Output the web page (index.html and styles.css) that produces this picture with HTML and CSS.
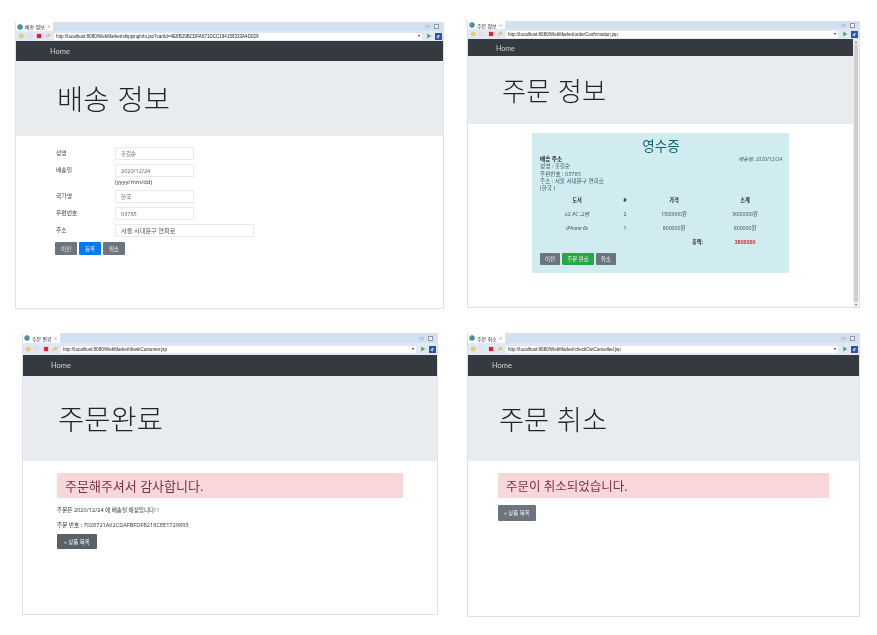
FILE: index.html
```html
<!DOCTYPE html>
<html lang="ko">
<head>
    <meta charset="UTF-8">
    <title>WebMarket</title>
    <link rel="stylesheet" href="styles.css">
</head>
<body>
    <svg class="sprites" width="0" height="0">
        <symbol id="i_globe" viewBox="0 0 10 10"><circle cx="5" cy="5" r="4.5" fill="#3f86c4"/><path d="M2 3l3-2 1 2-2 2 1 3-2-1z" fill="#5fae4c"/></symbol>
        <symbol id="i_back" viewBox="0 0 10 10"><path d="M1 5l4-4v2h4v4H5v2z" fill="#f1cf6a" stroke="#d8ab3c" stroke-width=".5"/></symbol>
        <symbol id="i_fwd" viewBox="0 0 10 10"><path d="M9 5L5 1v2H1v4h4v2z" fill="#e6e6de" stroke="#cfcfc8" stroke-width=".5"/></symbol>
        <symbol id="i_stop" viewBox="0 0 10 10"><rect x="1.5" y="1.5" width="7" height="7" fill="#e5202c"/></symbol>
        <symbol id="i_refresh" viewBox="0 0 10 10"><path d="M1 8c1-4 3-5 5-5V1l3 3-3 3V5C4 5 3 6 1 8z" fill="#eec35a" stroke="#cf9f36" stroke-width=".4"/></symbol>
        <symbol id="i_go" viewBox="0 0 10 10"><path d="M2 1l7 4-7 4z" fill="#4fae5a"/></symbol>
        <symbol id="i_ext" viewBox="0 0 10 10"><rect width="10" height="10" fill="#2a53b0"/><path d="M2 6l3-3 3 1-3 1 1 3z" fill="#d9e2f5"/></symbol>
    </svg>

    <!-- 배송 정보 -->
    <section class="window win_shipping">
        <div class="tabbar">
            <div class="tab"><svg class="ico"><use href="#i_globe"/></svg>배송 정보 <span class="tab_x">✕</span></div>
            <div class="win_btns"><span class="win_min"></span><span class="win_max"></span></div>
        </div>
        <div class="toolbar">
            <svg class="ico"><use href="#i_back"/></svg>
            <svg class="ico"><use href="#i_fwd"/></svg>
            <svg class="ico"><use href="#i_stop"/></svg>
            <svg class="ico"><use href="#i_refresh"/></svg>
            <div class="url"><span>http://localhost:8080/WebMarket/shippingInfo.jsp?cartId=4E8B29BCDFA671DCC194156333A4D029</span><i class="caret"></i></div>
            <svg class="ico"><use href="#i_go"/></svg>
            <svg class="ico"><use href="#i_ext"/></svg>
        </div>
        <div class="page">
            <nav class="navbar"><a>Home</a></nav>
            <div class="jumbotron"><h1>배송 정보</h1></div>
            <form class="ship_form">
                <div class="row"><label>성명</label><div class="field">홍길순</div></div>
                <div class="row row_date"><label>배송일</label><div><div class="field">2020/12/24</div><div class="hint">(yyyy/mm/dd)</div></div></div>
                <div class="row"><label>국가명</label><div class="field">한국</div></div>
                <div class="row"><label>우편번호</label><div class="field">03785</div></div>
                <div class="row"><label>주소</label><div class="field field_wide">서울 서대문구 연희로</div></div>
                <div class="btns">
                    <a class="btn btn_gray">이전</a>
                    <a class="btn btn_blue">등록</a>
                    <a class="btn btn_gray">취소</a>
                </div>
            </form>
        </div>
    </section>

    <!-- 주문 정보 -->
    <section class="window win_confirm">
        <div class="tabbar">
            <div class="tab"><svg class="ico"><use href="#i_globe"/></svg>주문 정보 <span class="tab_x">✕</span></div>
            <div class="win_btns"><span class="win_min"></span><span class="win_max"></span></div>
        </div>
        <div class="toolbar">
            <svg class="ico"><use href="#i_back"/></svg>
            <svg class="ico"><use href="#i_fwd"/></svg>
            <svg class="ico"><use href="#i_stop"/></svg>
            <svg class="ico"><use href="#i_refresh"/></svg>
            <div class="url"><span>http://localhost:8080/WebMarket/orderConfirmation.jsp</span><i class="caret"></i></div>
            <svg class="ico"><use href="#i_go"/></svg>
            <svg class="ico"><use href="#i_ext"/></svg>
        </div>
        <div class="page_scroll">
            <div class="page">
                <nav class="navbar"><a>Home</a></nav>
                <div class="jumbotron"><h1>주문 정보</h1></div>
                <div class="receipt">
                    <h2>영수증</h2>
                    <div class="receipt_info">
                        <div>
                            <strong>배송 주소</strong><br>
                            성명 : 홍길순<br>
                            우편번호 : 03785<br>
                            주소 : 서울 서대문구 연희로<br>
                            (한국 )
                        </div>
                        <em>배송일: 2020/12/24</em>
                    </div>
                    <table>
                        <tr><th class="col_book">도서</th><th class="col_qty">#</th><th class="col_price">가격</th><th class="col_sum">소계</th></tr>
                        <tr><td><em>LG PC 그램</em></td><td>2</td><td>1500000원</td><td>3000000원</td></tr>
                        <tr><td><em>iPhone 6s</em></td><td>1</td><td>800000원</td><td>800000원</td></tr>
                        <tr><td></td><td></td><td class="total_label"><strong>총액:</strong></td><td class="total"><strong>3800000</strong></td></tr>
                    </table>
                    <div class="btns">
                        <a class="btn btn_gray">이전</a>
                        <a class="btn btn_green">주문 완료</a>
                        <a class="btn btn_gray">취소</a>
                    </div>
                </div>
            </div>
            <div class="scrollbar"><span class="arrow">▴</span><div class="thumb"></div><span class="arrow">▾</span></div>
        </div>
    </section>

    <!-- 주문 완료 -->
    <section class="window win_thanks">
        <div class="tabbar">
            <div class="tab"><svg class="ico"><use href="#i_globe"/></svg>주문 완료 <span class="tab_x">✕</span></div>
            <div class="win_btns"><span class="win_min"></span><span class="win_max"></span></div>
        </div>
        <div class="toolbar">
            <svg class="ico"><use href="#i_back"/></svg>
            <svg class="ico"><use href="#i_fwd"/></svg>
            <svg class="ico"><use href="#i_stop"/></svg>
            <svg class="ico"><use href="#i_refresh"/></svg>
            <div class="url"><span>http://localhost:8080/WebMarket/thankCustomer.jsp</span><i class="caret"></i></div>
            <svg class="ico"><use href="#i_go"/></svg>
            <svg class="ico"><use href="#i_ext"/></svg>
        </div>
        <div class="page">
            <nav class="navbar"><a>Home</a></nav>
            <div class="jumbotron"><h1>주문완료</h1></div>
            <div class="result">
                <div class="alert">주문해주셔서 감사합니다.</div>
                <p>주문은 2020/12/24 에 배송될 예정입니다! !</p>
                <p>주문 번호 : 7028721A62CDAFBFDFB218CEE1729893</p>
                <a class="btn btn_dark">« 상품 목록</a>
            </div>
        </div>
    </section>

    <!-- 주문 취소 -->
    <section class="window win_cancel">
        <div class="tabbar">
            <div class="tab"><svg class="ico"><use href="#i_globe"/></svg>주문 취소 <span class="tab_x">✕</span></div>
            <div class="win_btns"><span class="win_min"></span><span class="win_max"></span></div>
        </div>
        <div class="toolbar">
            <svg class="ico"><use href="#i_back"/></svg>
            <svg class="ico"><use href="#i_fwd"/></svg>
            <svg class="ico"><use href="#i_stop"/></svg>
            <svg class="ico"><use href="#i_refresh"/></svg>
            <div class="url"><span>http://localhost:8080/WebMarket/checkOutCancelled.jsp</span><i class="caret"></i></div>
            <svg class="ico"><use href="#i_go"/></svg>
            <svg class="ico"><use href="#i_ext"/></svg>
        </div>
        <div class="page">
            <nav class="navbar"><a>Home</a></nav>
            <div class="jumbotron"><h1>주문 취소</h1></div>
            <div class="result">
                <div class="alert">주문이 취소되었습니다.</div>
                <a class="btn btn_gray">« 상품 목록</a>
            </div>
        </div>
    </section>
</body>
</html>
```

FILE: styles.css
```css
* {
    box-sizing: border-box;
}

body,
html {
    padding: 0;
    margin: 0;
    height: 100%;
    background-color: #fff;
    font-family: "Open Sans", "Noto Sans CJK KR", sans-serif;
    color: #212529;
}

.sprites {
    position: absolute;
}

/* the four browser windows sit on a free canvas */
.window {
    position: absolute;
    display: flex;
    flex-direction: column;
    overflow: hidden;
    background-color: #fff;
    border: 1px solid #dfe1e7;
    border-top: 0;
    filter: blur(0.35px);
}

.win_shipping {
    left: 15px;
    top: 22px;
    width: 429px;
    height: 287px;
}

.win_confirm {
    left: 467px;
    top: 21px;
    width: 393px;
    height: 287px;
}

.win_thanks {
    left: 22px;
    top: 333px;
    width: 416px;
    height: 282px;
}

.win_cancel {
    left: 467px;
    top: 333px;
    width: 393px;
    height: 284px;
}

.tabbar {
    display: flex;
    justify-content: space-between;
    height: 9px;
    flex: none;
    background-color: #d3e0f0;
}

.win_confirm .tabbar {
    height: 8px;
}

.win_thanks .tabbar,
.win_cancel .tabbar {
    height: 10px;
}

.tab {
    display: flex;
    align-items: center;
    gap: 1px;
    padding: 0 3px 0 1px;
    background-color: #fff;
    font-size: 5px;
    color: #222;
    white-space: pre;
}

.tab .ico {
    margin-right: 1px;
}

.tab_x {
    color: #888;
    font-size: 4px;
}

.win_btns {
    display: flex;
    align-items: center;
    gap: 4px;
    padding-right: 4px;
}

.win_min {
    width: 5px;
    height: 3px;
    border: 1px solid #b4bfcc;
    border-radius: 1px;
}

.win_max {
    width: 5px;
    height: 5px;
    border: 1px solid #8f99a6;
    background-color: #eef2f7;
}

.toolbar {
    display: flex;
    align-items: center;
    gap: 3px;
    height: 10px;
    flex: none;
    padding: 0 1px 0 2px;
    background-color: #dfe8f4;
}

.win_thanks .toolbar,
.win_cancel .toolbar {
    height: 12px;
}

.ico {
    width: 6px;
    height: 6px;
    flex: none;
}

.toolbar .ico:nth-last-of-type(2) {
    margin-left: 1px;
}

.toolbar .ico:last-of-type {
    width: 7px;
    height: 7px;
}

.url {
    flex: 1;
    display: flex;
    align-items: center;
    justify-content: space-between;
    height: 7px;
    padding: 0 2px;
    background-color: #fff;
    font-family: "Liberation Sans", sans-serif;
    font-size: 4.55px;
    color: #222;
    white-space: nowrap;
    overflow: hidden;
}

.caret {
    width: 0;
    height: 0;
    border: 1.5px solid transparent;
    border-top: 2px solid #222;
    border-bottom: 0;
}

.page {
    flex: 1;
    min-width: 0;
}

.page_scroll {
    flex: 1;
    display: flex;
    min-height: 0;
}

.navbar {
    display: flex;
    align-items: center;
    height: 20px;
    padding-left: 34px;
    background-color: #343a40;
    color: #d2d2d2;
    font-family: "Lato", sans-serif;
    font-size: 7.5px;
}

.jumbotron {
    display: flex;
    align-items: center;
    height: 75px;
    padding-left: 41px;
    background-color: #e9ecef;
    border-radius: 2px;
}

h1 {
    margin: 0;
    font-weight: 300;
    font-size: 28.5px;
    line-height: 1.2;
    font-family: "Noto Sans CJK KR", sans-serif;
}

/* shipping form */
.ship_form {
    padding: 11px 0 0 40px;
}

.row {
    display: flex;
    margin-bottom: 4px;
    font-size: 5.8px;
    color: #444;
}

.row label {
    width: 59px;
    padding-top: 1px;
}

.field {
    display: flex;
    align-items: center;
    width: 79px;
    height: 13px;
    padding-left: 5px;
    background-color: #fff;
    border: 1px solid #e8eaec;
    font-size: 5.5px;
    color: #555c63;
}

.field_wide {
    width: 139px;
    font-size: 6.2px;
}

.hint {
    margin-top: 1px;
    height: 8px;
    line-height: 8px;
    font-size: 5.8px;
    color: #333;
}

.btns {
    display: flex;
    gap: 2px;
}

.ship_form .btns {
    margin-top: 5px;
    margin-left: -1px;
}

.btn {
    display: inline-flex;
    align-items: center;
    justify-content: center;
    height: 13px;
    padding: 0 5px;
    border-radius: 1px;
    font-size: 5.5px;
    color: #eef0f2;
}

.btn_gray {
    background-color: #6c757d;
}

.btn_blue {
    background-color: #007bff;
}

.btn_green {
    background-color: #28a745;
}

.btn_dark {
    background-color: #5a6268;
}

.ship_form .btn {
    width: 22px;
}

/* receipt */
.win_confirm .navbar {
    height: 17px;
    padding-left: 28px;
    font-size: 7px;
}

.win_confirm .jumbotron {
    height: 68px;
    padding-left: 34px;
}

.win_confirm h1 {
    font-size: 26.3px;
}

.receipt {
    width: 257px;
    height: 140px;
    margin: 9px 0 0 64px;
    padding: 5px 7px 0 8px;
    background-color: #d1ecf1;
    border-radius: 1px;
    color: #3d5c64;
    font-size: 5.2px;
    line-height: 7.3px;
}

h2 {
    margin: 0;
    height: 17px;
    line-height: 17px;
    text-align: center;
    font-weight: 400;
    font-size: 13.5px;
    color: #16606c;
}

.receipt_info {
    display: flex;
    justify-content: space-between;
    margin-top: 1px;
    font-size: 5.6px;
}

.receipt_info em {
    font-size: 5.2px;
}

.receipt_info strong {
    color: #222;
}

table {
    width: 238px;
    margin-top: 1px;
    border-collapse: collapse;
    table-layout: fixed;
    text-align: center;
}

th,
td {
    height: 14px;
    padding: 0;
    color: #444;
}

th {
    color: #222;
}

.col_book {
    width: 74px;
}

.col_qty {
    width: 22px;
}

.col_price {
    width: 76px;
}

.total_label {
    text-align: right;
    padding-right: 9px;
}

.total_label strong {
    color: #333;
}

.total strong {
    color: #dc3545;
}

.receipt .btns {
    margin-top: 4px;
}

.receipt .btn {
    height: 12px;
    padding: 0 5px;
}

.scrollbar {
    display: flex;
    flex-direction: column;
    align-items: center;
    flex: none;
    width: 6px;
    background-color: #f0f0f0;
    font-size: 4px;
    line-height: 5px;
    color: #666;
}

.thumb {
    flex: 1;
    width: 4px;
    background-color: #cfcfcf;
}

/* thanks and cancelled pages */
.win_thanks .navbar,
.win_cancel .navbar {
    height: 21px;
    padding-left: 28px;
}

.win_cancel .navbar {
    padding-left: 24px;
}

.win_thanks .jumbotron,
.win_cancel .jumbotron {
    height: 85px;
    padding-left: 35px;
}

.win_cancel .jumbotron {
    padding-left: 31px;
}

.win_cancel h1 {
    font-size: 27.3px;
}

.result {
    padding: 12px 0 0 34px;
}

.win_cancel .result {
    padding-left: 30px;
}

.alert {
    display: flex;
    align-items: center;
    width: 346px;
    height: 25px;
    padding-left: 8px;
    background-color: #f8d7da;
    border-radius: 1px;
    font-size: 13px;
    color: #7c343b;
}

.win_cancel .alert {
    width: 331px;
    margin-bottom: 7px;
    font-size: 12.5px;
}

.result p {
    margin: 8px 0 0;
    height: 8px;
    line-height: 8px;
    font-size: 5.6px;
    color: #333;
}

.result p + p {
    margin-top: 7px;
}

.result .btn {
    display: flex;
    height: 15px;
    width: 40px;
    padding: 0;
}

.win_thanks .btn {
    margin-top: 5px;
}

.win_cancel .result .btn {
    width: 38px;
    height: 16px;
}
```
